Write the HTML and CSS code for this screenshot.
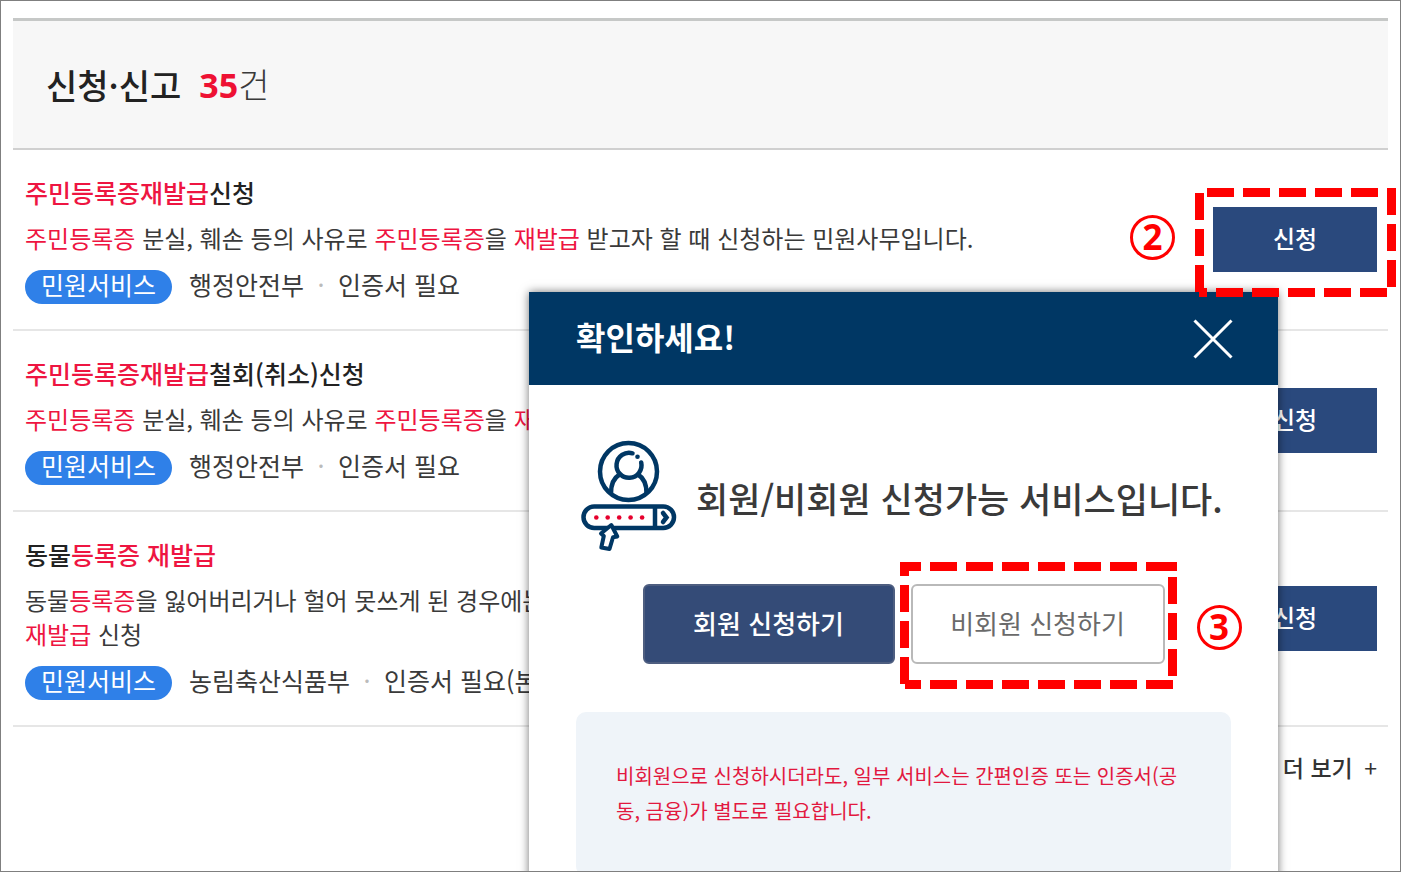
FILE: index.html
```html
<!DOCTYPE html>
<html lang="ko">
  <head>
    <meta charset="UTF-8" />
    <meta name="viewport" content="width=device-width, initial-scale=1.0" />
    <title>신청·신고</title>
    <link rel="stylesheet" href="styles.css">
  </head>
  <body>
    <div class="page">
      <!-- Search results -->
      <main>
        <header class="result-head">
          <h1>신청·신고</h1>
          <p class="count"><strong>35</strong>건</p>
        </header>

        <ul class="result-list">
          <li class="item">
            <div class="info">
              <h2><mark>주민등록증재발급</mark>신청</h2>
              <p class="desc"><mark>주민등록증</mark> 분실, 훼손 등의 사유로 <mark>주민등록증</mark>을 <mark>재발급</mark> 받고자 할 때 신청하는 민원사무입니다.</p>
              <p class="meta"><span class="badge">민원서비스</span><span>행정안전부</span><i>·</i><span>인증서 필요</span></p>
            </div>
            <div class="action">
              <button type="button" class="apply">신청</button>
              <svg class="dash dash-apply" width="201" height="109" viewBox="0 0 201 109" aria-hidden="true">
                <path d="M12 4.5H201M196.500 0V100M192 104.500H4M4.500 5V104.500" />
              </svg>
              <span class="step step-2">2</span>
            </div>
          </li>

          <li class="item">
            <div class="info">
              <h2><mark>주민등록증재발급</mark>철회(취소)신청</h2>
              <p class="desc"><mark>주민등록증</mark> 분실, 훼손 등의 사유로 <mark>주민등록증</mark>을 <mark>재발급</mark> 신청한 경우 철회</p>
              <p class="meta"><span class="badge">민원서비스</span><span>행정안전부</span><i>·</i><span>인증서 필요</span></p>
            </div>
            <div class="action">
              <button type="button" class="apply">신청</button>
            </div>
          </li>

          <li class="item">
            <div class="info">
              <h2>동물<mark>등록증 재발급</mark></h2>
              <p class="desc">동물<mark>등록증</mark>을 잃어버리거나 헐어 못쓰게 된 경우에는<br><mark>재발급</mark> 신청</p>
              <p class="meta"><span class="badge">민원서비스</span><span>농림축산식품부</span><i>·</i><span>인증서 필요(본인)</span></p>
            </div>
            <div class="action">
              <button type="button" class="apply">신청</button>
            </div>
          </li>
        </ul>

        <div class="more"><a href="#">더 보기 <span>+</span></a></div>
      </main>

      <!-- Layer popup -->
      <section class="popup" role="dialog" aria-labelledby="popup-title">
        <header class="popup-head">
          <h2 id="popup-title">확인하세요!</h2>
          <button type="button" class="close" aria-label="닫기">
            <svg width="40" height="40" viewBox="0 0 40 40"><path d="M1.500 1.500 38.500 38.500M38.500 1.500 1.500 38.500" /></svg>
          </button>
        </header>

        <div class="popup-body">
          <div class="guide">
            <svg class="guide-icon" width="96" height="112" viewBox="0 0 96 112" aria-hidden="true">
              <g fill="none" stroke="#003764" stroke-width="4.500">
                <circle cx="47.500" cy="31.500" r="28.500" />
                <path d="M51.500 13.300A12.500 12.500 0 1 0 60.200 22.500" stroke-linecap="round" />
                <path d="M30 53C30 45 32 38.500 38.500 34.500M65.500 53C65.500 45 63.500 38.500 57 34.500" />
                <rect x="2.500" y="66.500" width="90.500" height="21.500" rx="10.700" />
                <path d="M74 66V88" />
                <path d="M82 73 85.500 77.500 82 82" stroke-width="4.500" stroke-linecap="round" />
                <path d="M30.300 85 36.300 96.500 32 97.300 28.500 109 20.300 107.500 22.800 96 20 93.500Z" fill="#fff" stroke-width="4" stroke-linejoin="round" />
              </g>
              <circle cx="56.500" cy="16.700" r="2.300" fill="#003764" />
              <g fill="#e6002d">
                <circle cx="15.300" cy="77.500" r="2.300" />
                <circle cx="26.700" cy="77.500" r="2.300" />
                <circle cx="38.200" cy="77.500" r="2.300" />
                <circle cx="49.600" cy="77.500" r="2.300" />
                <circle cx="61.100" cy="77.500" r="2.300" />
              </g>
            </svg>
            <p>회원/비회원 신청가능 서비스입니다.</p>
          </div>

          <div class="buttons">
            <button type="button" class="btn member">회원 신청하기</button>
            <div class="guest-wrap">
              <button type="button" class="btn guest">비회원 신청하기</button>
              <svg class="dash dash-guest" width="277" height="127" viewBox="0 0 277 127" aria-hidden="true">
                <path d="M-6 4.500H273M273 4.500H277M272.500 15V114M273 122.500H5M4.500 -13V122" />
              </svg>
              <span class="step step-3">3</span>
            </div>
          </div>

          <p class="notice">비회원으로 신청하시더라도, 일부 서비스는 간편인증 또는 인증서(공동, 금융)가 별도로 필요합니다.</p>
        </div>
      </section>
    </div>
  </body>
</html>
```
FILE: styles.css
```css
* {
  box-sizing: border-box;
  margin: 0;
  padding: 0;
}
body {
  font-family: "Noto Sans CJK KR", sans-serif;
  color: #3a3a3a;
  background: #fff;
}
button {
  font-family: inherit;
  cursor: pointer;
}
mark {
  background: none;
  color: #ee1541;
}
.page {
  position: relative;
  min-height: 100vh;
  padding: 17px 12px 0;
  border: 1px solid #7f7f7f;
  overflow: hidden;
}

/* result list */
.result-head {
  display: flex;
  align-items: center;
  gap: 18px;
  height: 132px;
  padding-left: 33px;
  background: #f7f7f7;
  border-top: 3px solid #c6c8c7;
  border-bottom: 2px solid #d0d0d0;
}
.result-head h1,
.count {
  font-size: 34px;
  line-height: 48px;
}
.result-head h1 {
  font-weight: 500;
  color: #222;
}
.count {
  font-weight: 300;
}
.count strong {
  font-family: "Noto Sans", sans-serif;
  font-weight: 700;
  color: #ee1133;
}
.result-list {
  list-style: none;
}
.item {
  display: flex;
  align-items: center;
  justify-content: space-between;
  padding: 23px 11px 24px 12px;
  border-bottom: 2px solid #e6e6e6;
}
.item h2 {
  margin-bottom: 10px;
  font-size: 25px;
  font-weight: 500;
  line-height: 38px;
  color: #222;
}
.desc {
  margin-bottom: 14px;
  font-size: 24px;
  line-height: 34px;
}
.meta {
  display: flex;
  align-items: center;
  font-size: 25px;
  line-height: 30px;
}
.meta > span,
.meta i {
  height: 36px;
}
.meta i {
  width: 34px;
  font-style: normal;
  text-align: center;
  color: #bbb;
}
.meta .badge {
  height: 34px;
  margin-right: 17px;
  padding: 0 16px;
  border-radius: 17px;
  line-height: 28px;
  color: #fff;
  background: #2f80e8;
}
.action {
  position: relative;
}
.apply {
  display: block;
  width: 164px;
  height: 65px;
  padding-bottom: 3px;
  border: 0;
  font-size: 24px;
  font-weight: 500;
  color: #fff;
  background: #2a497d;
}
.more {
  padding: 21px 11px 0 0;
  text-align: right;
}
.more a {
  font-size: 23px;
  line-height: 38px;
  font-weight: 500;
  color: #333;
  text-decoration: none;
}
.more span {
  margin-left: 5px;
  font-weight: 400;
}

/* popup */
.popup {
  position: absolute;
  top: 291px;
  right: 122px;
  z-index: 1;
  width: 749px;
  background: #fff;
  box-shadow: 0 0 9px rgba(0, 0, 0, 0.55);
}
.popup-head {
  display: flex;
  align-items: center;
  justify-content: space-between;
  height: 93px;
  padding: 0 45px 0 47px;
  background: #003764;
  color: #fff;
}
.popup-head h2 {
  padding-bottom: 5px;
  font-size: 32px;
  font-weight: 700;
}
.close {
  width: 40px;
  height: 40px;
  border: 0;
  background: none;
}
.close svg {
  display: block;
  fill: none;
  stroke: #fff;
  stroke-width: 3;
}
.popup-body {
  padding: 55px 47px 48px;
}
.guide {
  display: flex;
  align-items: center;
  gap: 19px;
  padding-left: 5px;
  white-space: nowrap;
}
.guide p {
  padding-top: 4px;
  font-size: 35px;
  font-weight: 500;
  line-height: 48px;
}
.guide-icon {
  flex: none;
}
.buttons {
  display: flex;
  justify-content: center;
  gap: 16px;
  margin: 32px 0 48px;
}
.btn {
  width: 252px;
  height: 80px;
  padding-bottom: 3px;
  border: 2px solid #b9b9b9;
  border-radius: 6px;
  font-size: 26px;
}
.member {
  border-color: #4e5e80;
  font-weight: 500;
  color: #fff;
  background: #344b77;
}
.guest-wrap {
  position: relative;
}
.guest {
  display: block;
  width: 254px;
  color: #6a6a6a;
  background: #fff;
}
.notice {
  padding: 46px 40px 48px;
  border-radius: 10px;
  font-size: 20px;
  line-height: 35px;
  word-break: break-all;
  color: #e2183f;
  background: #eff4f9;
}

/* step marks */
.dash {
  position: absolute;
  z-index: 2;
  fill: none;
  stroke: #f00;
  stroke-width: 9;
  stroke-dasharray: 27 9;
  pointer-events: none;
}
.dash-apply {
  top: -19px;
  left: -18px;
}
.dash-guest {
  top: -22px;
  left: -11px;
}
.step {
  position: absolute;
  width: 45px;
  height: 45px;
  border: 3px solid #f00;
  border-radius: 50%;
  font-family: "Noto Sans", sans-serif;
  font-size: 35px;
  font-weight: 700;
  line-height: 38px;
  text-align: center;
  color: #f00;
}
.step-2 {
  top: 8px;
  left: -83px;
}
.step-3 {
  top: 21px;
  left: 286px;
}
```
